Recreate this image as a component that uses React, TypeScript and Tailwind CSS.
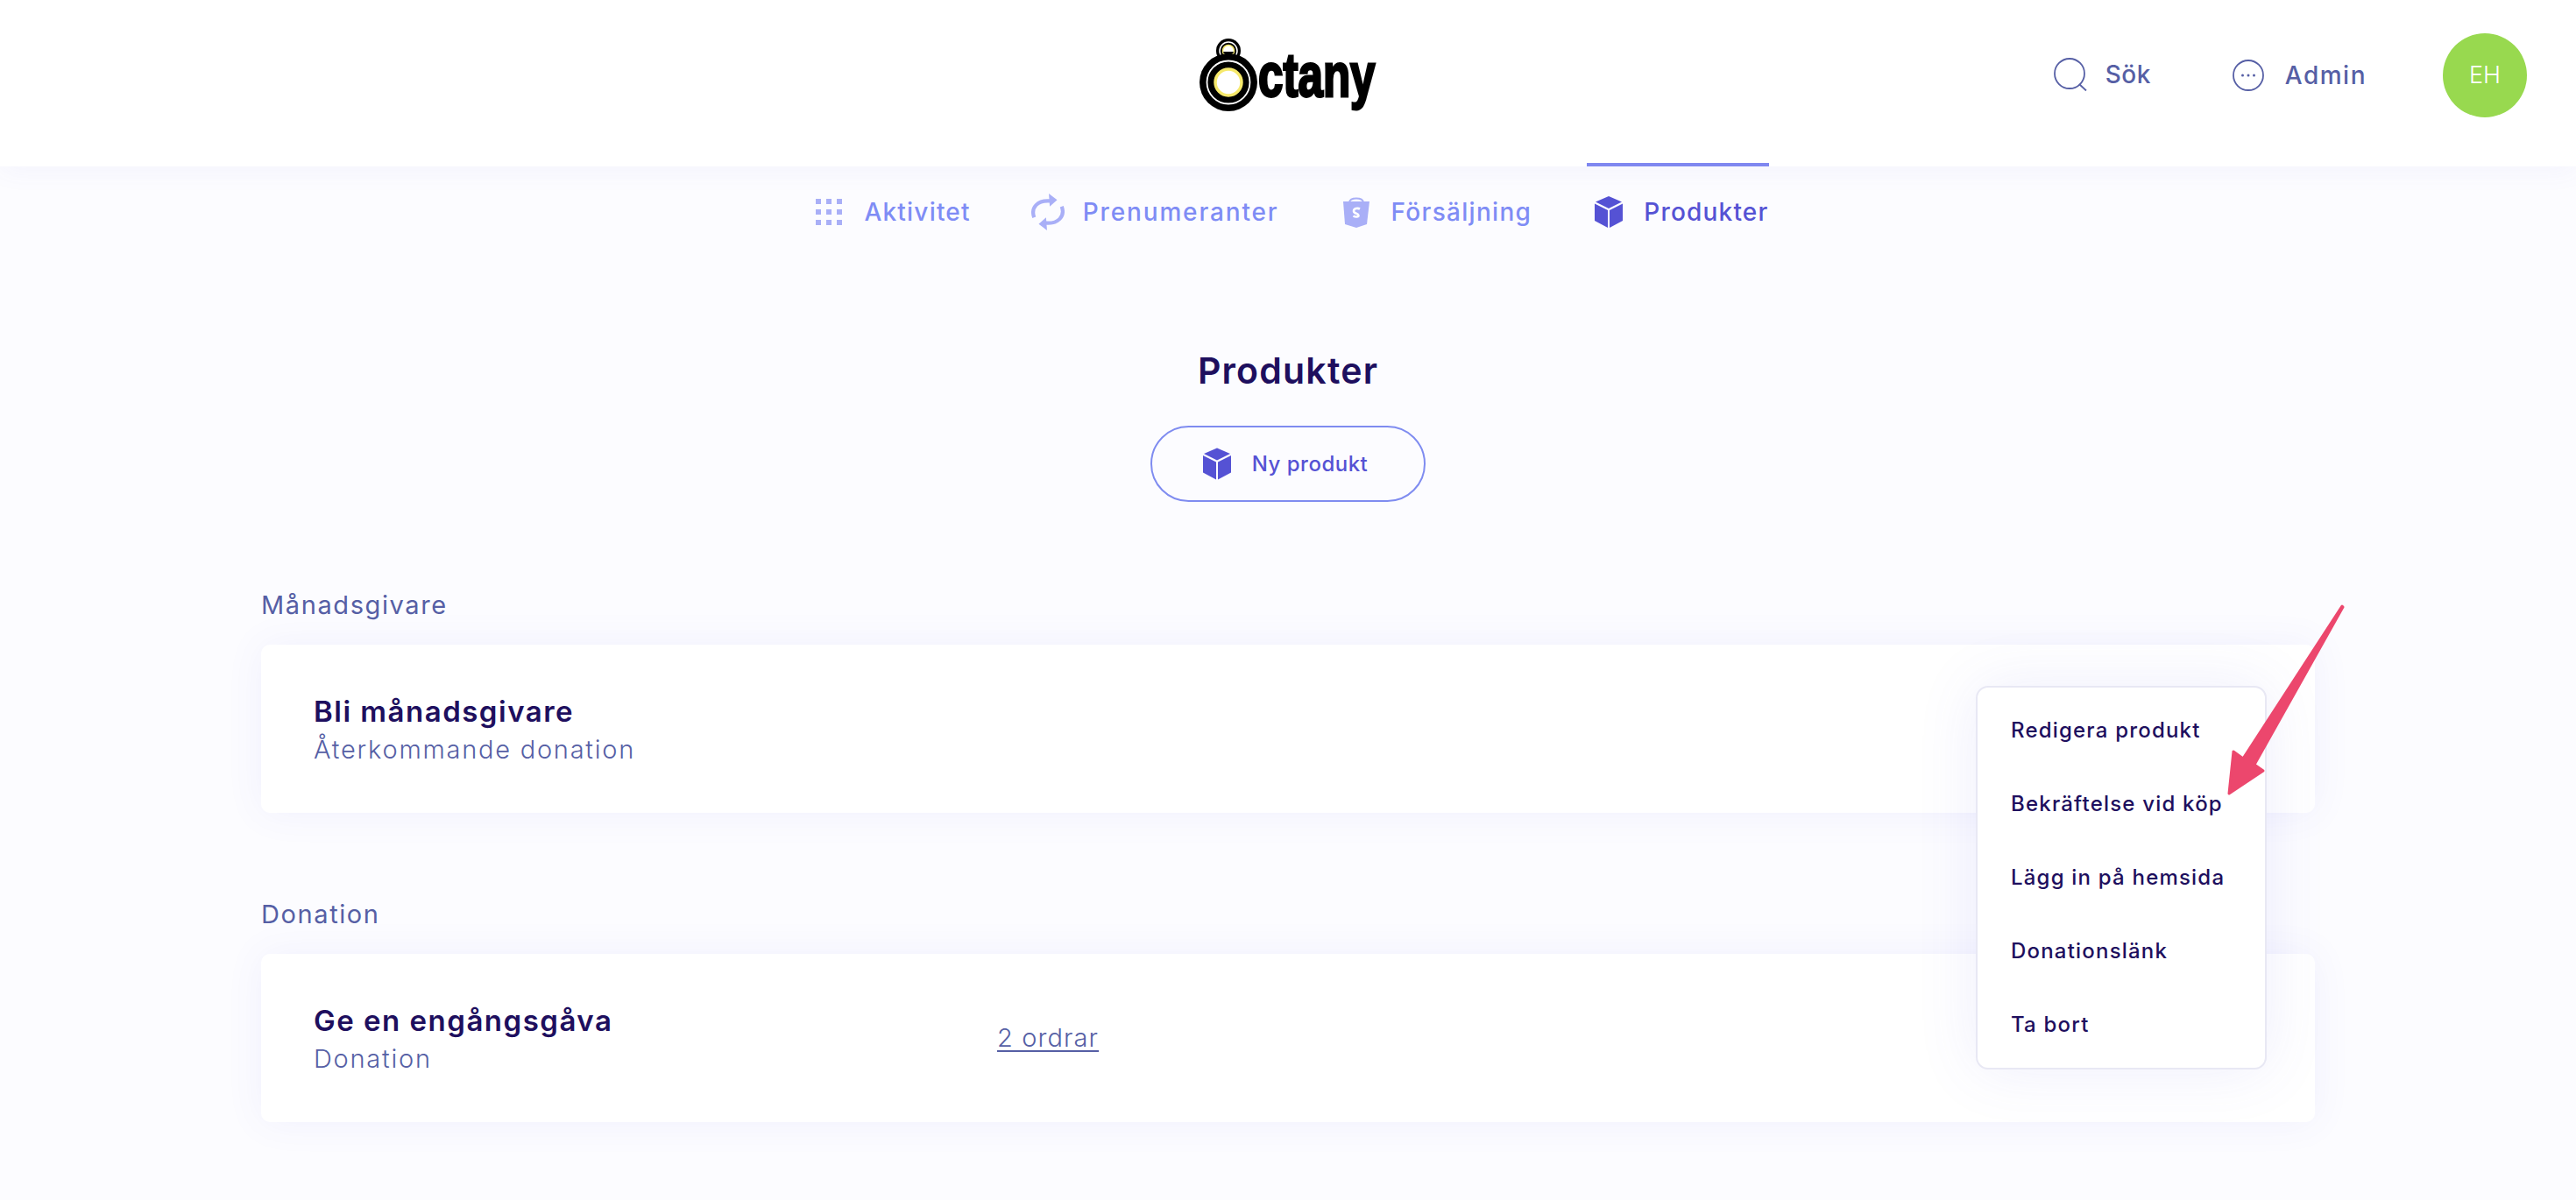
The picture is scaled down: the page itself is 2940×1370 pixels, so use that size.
import React from "react";

function Cube({ className }: { className?: string }) {
  return (
    <svg viewBox="0 0 32 36" className={className} fill="currentColor">
      <path d="M16 0 31 6.5 16 14 1 6.5Z" />
      <path d="M0 8.5 15 16V36L0 28Z" />
      <path d="M32 8.5 17 16V36L32 28Z" />
    </svg>
  );
}

function Dots() {
  return (
    <svg viewBox="0 0 30 30" className="w-[30px] h-[30px]" fill="#a9aff7">
      {[0, 12, 24].map((y) =>
        [0, 12, 24].map((x) => <rect key={`${x}-${y}`} x={x} y={y} width="6" height="6" />)
      )}
    </svg>
  );
}

function Sync() {
  return (
    <svg viewBox="0 0 36 40" className="w-[38px] h-[42px] shrink-0" fill="none">
      <path d="M3 26C-1 15 7 7 20 8" stroke="#a9aff7" strokeWidth="4" />
      <path d="M33 14C37 25 29 33 16 32" stroke="#a9aff7" strokeWidth="4" />
      <path d="M19 0 28 7 20 14Z" fill="#a9aff7" />
      <path d="M17 40 8 33 16 26Z" fill="#a9aff7" />
    </svg>
  );
}

function Bag() {
  return (
    <svg viewBox="0 0 32 36" className="w-[32px] h-[36px]">
      <path d="M8 7C9 1 23 1 24 7" fill="none" stroke="#a9aff7" strokeWidth="2" />
      <path d="M1 6 31 6 28 32 16 36 3 32Z" fill="#a9aff7" />
      <path
        d="M20 14.5C18 13.4 13 13.6 13 17C13 20 18.500 19.500 18.500 22C18.500 24 15 24 12.500 22.500"
        fill="none"
        stroke="#fff"
        strokeWidth="2.600"
      />
    </svg>
  );
}

function Logo() {
  return (
    <div className="flex items-start h-[84px]">
      <svg viewBox="0 0 67 84" className="w-[67px] h-[84px] shrink-0">
        <circle cx="33" cy="14" r="14" fill="#000" />
        <circle cx="33" cy="14" r="10" fill="none" stroke="#fff" strokeWidth="1.500" />
        <circle cx="33" cy="14" r="6.500" fill="#fff" stroke="#f6e96b" strokeWidth="1.500" />
        <path d="M27 15H39C38 20 28 20 27 15Z" fill="#000" />
        <circle cx="33" cy="50" r="33" fill="#000" />
        <circle cx="33" cy="50" r="24.500" fill="none" stroke="#fff" strokeWidth="1.800" />
        <circle cx="33" cy="50" r="15" fill="#fff" stroke="#f6e96b" strokeWidth="3.500" />
      </svg>
      <span className="block w-[135px] font-['Liberation_Sans',sans-serif] font-bold text-[71px] leading-[84px] text-black origin-left scale-x-[0.72] [-webkit-text-stroke:3px_black] whitespace-nowrap">
        ctany
      </span>
    </div>
  );
}

function Tab({
  icon,
  label,
  active,
  tracking,
}: {
  icon: React.ReactNode;
  label: string;
  active?: boolean;
  tracking: string;
}) {
  return (
    <a
      className={`h-[108px] -mt-1 flex items-center gap-[24px] pl-[9px] border-t-4 text-[28px] font-medium ${tracking} ${
        active ? "border-[#7f87f0] text-[#5552d4]" : "border-transparent text-[#7f8cf5]"
      }`}
    >
      <span className="w-[32px] flex justify-center">{icon}</span>
      {label}
    </a>
  );
}

function Product({
  section,
  title,
  subtitle,
  orders,
}: {
  section: string;
  title: string;
  subtitle: string;
  orders?: string;
}) {
  return (
    <section>
      <h2 className="h-[40px] leading-[40px] text-[29px] tracking-[1.6px] text-[#565fa5]">{section}</h2>
      <div className="relative mt-[25px] h-[192px] rounded-[10px] bg-white px-[60px] flex items-center shadow-[0_0_44px_rgba(90,90,225,0.07)]">
        <div className="w-[780px] shrink-0 pt-[3px]">
          <div className="text-[33px] leading-[44px] font-semibold tracking-[1.5px] text-[#1e0f5e]">{title}</div>
          <div className="text-[29px] leading-[44px] font-light tracking-[1.75px] text-[#565fa5]">{subtitle}</div>
        </div>
        {orders && (
          <a className="text-[29px] font-light tracking-[1.1px] text-[#565fa5] underline underline-offset-4">
            {orders}
          </a>
        )}
      </div>
    </section>
  );
}

const menuItems = ["Redigera produkt", "Bekräftelse vid köp", "Lägg in på hemsida", "Donationslänk", "Ta bort"];

export default function App() {
  return (
    <div className="relative min-h-[1370px] bg-[#fcfcff] font-['Inter',sans-serif] overflow-hidden">
      <header className="relative h-[190px] pb-[18px] bg-white grid grid-cols-[1fr_auto_1fr] items-center shadow-[0_6px_28px_rgba(90,90,225,0.05)]">
        <div />
        <Logo />
        <div className="flex items-center justify-end pr-[56px] text-[28px] font-medium tracking-[1.5px] text-[#565fa5]">
          <a className="flex items-center gap-[21px] mb-[2px] tracking-[0.5px]">
            <svg viewBox="0 0 38 38" className="w-[38px] h-[38px]" fill="none" stroke="#565fa5" strokeWidth="1.800">
              <circle cx="18" cy="18" r="17" />
              <path d="M29 30 37 37.500" />
            </svg>
            Sök
          </a>
          <a className="flex items-center gap-[24px] ml-[93px]">
            <svg viewBox="0 0 36 36" className="w-[36px] h-[36px]" fill="none" stroke="#565fa5" strokeWidth="1.800">
              <circle cx="18" cy="18" r="17" />
              <circle cx="11.500" cy="18" r="1.500" fill="#565fa5" stroke="none" />
              <circle cx="18" cy="18" r="1.500" fill="#565fa5" stroke="none" />
              <circle cx="24.500" cy="18" r="1.500" fill="#565fa5" stroke="none" />
            </svg>
            Admin
          </a>
          <div className="ml-[87px] w-[96px] h-[96px] rounded-full bg-[#98d94f] flex items-center justify-center text-[27px] font-light tracking-normal text-white">
            EH
          </div>
        </div>
      </header>

      <nav className="relative flex justify-center gap-[63px]">
        <Tab icon={<Dots />} label="Aktivitet" tracking="tracking-[1.2px]" />
        <Tab icon={<Sync />} label="Prenumeranter" tracking="tracking-[1.85px]" />
        <Tab icon={<Bag />} label="Försäljning" tracking="tracking-[1.3px]" />
        <Tab
          icon={<Cube className="w-[33px] h-[38px] text-[#5552d4]" />}
          label="Produkter"
          active
          tracking="tracking-[1.2px]"
        />
      </nav>

      <main className="px-[298px]">
        <div className="mt-[101px] flex flex-col items-center">
          <h1 className="text-[41px] leading-[56px] font-semibold tracking-[1.2px] text-[#1e0f5e]">Produkter</h1>
          <button className="mt-[35px] w-[314px] h-[87px] pr-[6px] rounded-full border-2 border-[#7f8cf0] flex items-center justify-center gap-[24px] text-[24px] font-medium tracking-[0.5px] text-[#5552d4]">
            <Cube className="w-[32px] h-[37px]" />
            Ny produkt
          </button>
        </div>

        <div className="mt-[98px]">
          <Product section="Månadsgivare" title="Bli månadsgivare" subtitle="Återkommande donation" />
        </div>
        <div className="mt-[96px]">
          <Product section="Donation" title="Ge en engångsgåva" subtitle="Donation" orders="2 ordrar" />
        </div>
      </main>

      {/* öppen meny och pil ligger ovanpå korten */}
      <div className="absolute left-[2255px] top-[783px] w-[332px] h-[438px] rounded-[14px] bg-white border-2 border-[#e8e8f4] shadow-[0_0_70px_rgba(90,90,225,0.1)] pl-[38px] pt-[7px]">
        {menuItems.map((item) => (
          <div key={item} className="h-[84px] flex items-center text-[24px] font-medium tracking-[1.2px] text-[#1e0f5e]">
            {item}
          </div>
        ))}
      </div>
      <svg viewBox="0 0 150 230" className="absolute left-[2535px] top-[685px] w-[150px] h-[230px]">
        <path
          d="M138 7 25 181 14 173 9 221 48 195 38 188 139 8Z"
          fill="#ec476d"
          stroke="#ec476d"
          strokeWidth="3"
          strokeLinejoin="round"
        />
      </svg>
    </div>
  );
}
